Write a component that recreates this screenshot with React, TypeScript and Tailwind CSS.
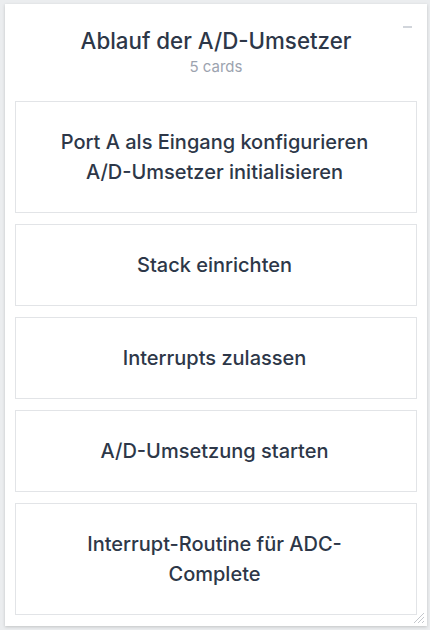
import React from "react";

const cards = [
  ["Port A als Eingang konfigurieren", "A/D-Umsetzer initialisieren"],
  ["Stack einrichten"],
  ["Interrupts zulassen"],
  ["A/D-Umsetzung starten"],
  ["Interrupt-Routine für ADC-", "Complete"],
];

export default function App() {
  return (
    <div
      className="w-[430px] h-[630px] bg-[#ebedef] pt-[4px] pl-[5px] pr-[3px] pb-[4px]"
      style={{ fontFamily: "Inter, 'Noto Sans', sans-serif" }}
    >
      <div className="relative h-full bg-white shadow-[0_1px_3px_rgba(0,0,0,0.18)] px-[10px] pt-[23px] flex flex-col">
        <div className="absolute right-[15px] top-[22px] w-[9px] h-[2px] bg-[#d1d5db]" />
        <div className="text-center text-[22.3px] leading-[28px] font-medium text-[#2d3748]">
          Ablauf der A/D-Umsetzer
        </div>
        <div className="text-center text-[15px] leading-[20px] text-[#9ca3af] mt-[2px]">
          5 cards
        </div>
        <div className="mt-[24px] flex flex-col gap-[11px]">
          {cards.map((lines, i) => (
            <div
              key={i}
              className="border border-[#e2e4e7] py-[25px] pr-[3px] text-center text-[20px] leading-[30px] font-medium text-[#2d3748]"
            >
              {lines.map((l, j) => (
                <div key={j}>{l}</div>
              ))}
            </div>
          ))}
        </div>
        <svg
          className="absolute right-[2px] bottom-[2px]"
          width="14"
          height="14"
          viewBox="0 0 14 14"
        >
          <line x1="13" y1="3" x2="3" y2="13" stroke="#c4c7cc" strokeWidth="1" />
          <line x1="13" y1="7" x2="7" y2="13" stroke="#c4c7cc" strokeWidth="1" />
          <line x1="13" y1="11" x2="11" y2="13" stroke="#c4c7cc" strokeWidth="1" />
        </svg>
      </div>
    </div>
  );
}
